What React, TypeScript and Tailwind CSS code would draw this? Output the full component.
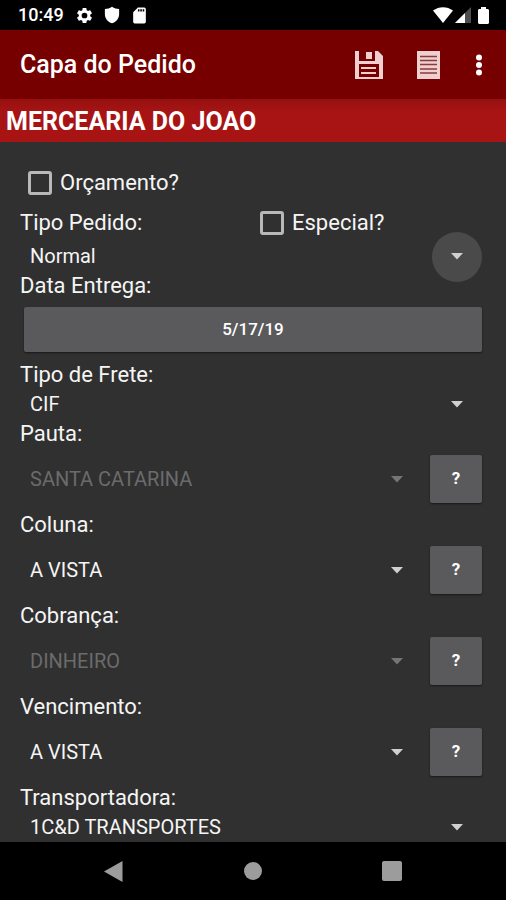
import { useState } from 'react';

function Caret({ dim }: { dim?: boolean }) {
  return (
    <svg
      aria-hidden="true"
      viewBox="0 0 12 7"
      className={`h-[7px] w-3 ${dim ? 'text-[#757575]' : 'text-[#d0d0d0]'}`}
    >
      <path d="M0 0h12L6 6.5z" fill="currentColor" />
    </svg>
  );
}

type SpinnerProps = {
  id: string;
  value: string;
  disabled?: boolean;
  highlighted?: boolean;
};

function Spinner({ id, value, disabled, highlighted }: SpinnerProps) {
  return (
    <div className="relative h-[29px] min-w-0 flex-1">
      <select
        id={id}
        disabled={disabled}
        defaultValue={value}
        className="block h-full w-full appearance-none bg-transparent pr-12 pl-[10px] text-[20px] leading-[29px] text-[#f5f5f5] outline-none disabled:text-[#6b6b6b] disabled:opacity-100"
      >
        <option>{value}</option>
      </select>
      <span
        className={`pointer-events-none absolute top-1/2 right-0 flex size-[50px] -translate-y-1/2 items-center justify-center rounded-full ${
          highlighted ? 'bg-[#4a4a4a]' : ''
        }`}
      >
        <Caret dim={disabled} />
      </span>
    </div>
  );
}

function Label({ htmlFor, text }: { htmlFor: string; text: string }) {
  return (
    <label htmlFor={htmlFor} className="block text-[22px] leading-[30px] text-[#f5f5f5]">
      {text}
    </label>
  );
}

function Field({ label, ...spinner }: SpinnerProps & { label: string }) {
  return (
    <div>
      <Label htmlFor={spinner.id} text={label} />
      <div className="flex">
        <Spinner {...spinner} />
      </div>
    </div>
  );
}

function LookupField({ label, ...spinner }: SpinnerProps & { label: string }) {
  return (
    <div>
      <Label htmlFor={spinner.id} text={label} />
      <div className="flex h-[61px] items-center gap-2 pb-[1px]">
        <Spinner {...spinner} />
        <button
          type="button"
          aria-label={`Consultar ${label}`}
          className="h-12 w-[52px] rounded-[2px] bg-[#5a5a5c] text-[17px] font-bold text-white shadow-[0_1px_2px_rgba(0,0,0,0.5)]"
        >
          ?
        </button>
      </div>
    </div>
  );
}

function Check({ text }: { text: string }) {
  const [checked, setChecked] = useState(false);
  return (
    <label className="flex items-center gap-2 text-[22px] leading-[30px] text-[#f5f5f5]">
      <input
        type="checkbox"
        checked={checked}
        onChange={(e) => setChecked(e.target.checked)}
        className="size-6 appearance-none rounded-[3px] border-[3px] border-[#b8b8b8] checked:bg-[#b8b8b8]"
      />
      {text}
    </label>
  );
}

function StatusBar() {
  return (
    <div className="flex h-[30px] items-center bg-black pr-[17px] pl-[18px] text-white">
      <span className="text-[18px] leading-[32px] font-medium">10:49</span>
      <div className="ml-[11px] flex items-center gap-[9px]">
        <svg viewBox="0 0 24 24" className="size-[19px]" fill="currentColor" aria-hidden="true">
          <path d="M19.14 12.94c.04-.3.06-.61.06-.94 0-.32-.02-.64-.07-.94l2.03-1.58a.49.49 0 0 0 .12-.61l-1.92-3.32a.49.49 0 0 0-.59-.22l-2.39.96a7 7 0 0 0-1.62-.94l-.36-2.54a.48.48 0 0 0-.48-.41h-3.84a.47.47 0 0 0-.47.41l-.36 2.54c-.59.24-1.13.57-1.62.94l-2.39-.96a.48.48 0 0 0-.59.22L2.74 8.87a.47.47 0 0 0 .12.61l2.03 1.58a6 6 0 0 0-.02 1.88l-2.03 1.58a.49.49 0 0 0-.12.61l1.92 3.32c.12.22.37.29.59.22l2.39-.96c.5.38 1.03.7 1.62.94l.36 2.54c.05.24.24.41.48.41h3.84c.24 0 .44-.17.47-.41l.36-2.54a7 7 0 0 0 1.62-.94l2.39.96c.22.08.47 0 .59-.22l1.92-3.32a.47.47 0 0 0-.12-.61zM12 15.6a3.6 3.6 0 1 1 0-7.2 3.6 3.6 0 0 1 0 7.2z" />
        </svg>
        <svg viewBox="0 0 24 24" className="size-[18px]" fill="currentColor" aria-hidden="true">
          <path d="M12 1C9 3 6 4 2.500 4v7c0 5.500 4 10.500 9.500 12 5.500-1.500 9.500-6.500 9.500-12V4C18 4 15 3 12 1z" />
        </svg>
        <svg viewBox="0 0 24 24" className="size-[19px]" fill="currentColor" aria-hidden="true">
          <path d="M18 2h-8L4 8v12a2 2 0 0 0 2 2h12a2 2 0 0 0 2-2V4a2 2 0 0 0-2-2zm-6 5h-2V4h2zm3 0h-2V4h2zm3 0h-2V4h2z" />
        </svg>
      </div>
      <div className="ml-auto flex items-center">
        <svg viewBox="0 0 20 16" className="h-4 w-5" fill="currentColor" aria-hidden="true">
          <path d="M0 3.500C6-1 14-1 20 3.500L10 16z" />
        </svg>
        <svg viewBox="0 0 16 16" className="ml-[2px] size-4" fill="currentColor" aria-hidden="true">
          <path d="M16 0v16H0z" opacity="0.3" />
          <path d="M10 6v10H0z" />
        </svg>
        <svg viewBox="0 0 11 17" className="ml-[7px] h-[17px] w-[11px]" fill="currentColor" aria-hidden="true">
          <path d="M3 0h5v2h2l1 1v13l-1 1H1l-1-1V3l1-1h2z" />
        </svg>
      </div>
    </div>
  );
}

function AppBar() {
  return (
    <header className="flex h-[69px] items-center bg-[#760000] pr-4 pl-5 text-white">
      <h1 className="text-[25px] font-medium">Capa do Pedido</h1>
      <div className="ml-auto flex items-center">
        <button type="button" aria-label="Salvar" className="text-[#efd0d0]">
          <svg viewBox="0 0 28 28" className="size-7" aria-hidden="true">
            <path d="M0 0h4v10h16V0h3l5 5v23H0z" fill="currentColor" />
            <path d="M11 1h6v7h-6z" fill="currentColor" />
            <path d="M4 13h20v13H4z" fill="#760000" />
            <path d="M6 16h15v2H6zM6 21h15v2H6z" fill="currentColor" />
          </svg>
        </button>
        <button type="button" aria-label="Itens" className="ml-[34px] text-[#efd0d0]">
          <svg viewBox="0 0 23 28" className="h-7 w-[23px]" aria-hidden="true">
            <path d="M0 0h23v28H0z" fill="currentColor" />
            <path d="M3 5.500h17M3 9.500h17M3 13.500h17M3 18h17M3 22h17" stroke="#8a3a3a" strokeWidth="1.500" />
          </svg>
        </button>
        <button type="button" aria-label="Mais opções" className="ml-7 flex w-[22px] justify-center">
          <svg viewBox="0 0 6 22" className="h-[22px] w-[6px]" fill="currentColor" aria-hidden="true">
            <circle cx="3" cy="3.500" r="3" />
            <circle cx="3" cy="11" r="3" />
            <circle cx="3" cy="18.500" r="3" />
          </svg>
        </button>
      </div>
    </header>
  );
}

function NavBar() {
  return (
    <nav className="flex h-[58px] items-center justify-center gap-[120px] bg-black text-[#9c9c9c]">
      <button type="button" aria-label="Voltar">
        <svg viewBox="0 0 20 21" className="h-[21px] w-5" fill="currentColor" aria-hidden="true">
          <path d="M18.500 0v21L0 10.500z" />
        </svg>
      </button>
      <button type="button" aria-label="Início" className="size-[18px] rounded-full bg-[#9c9c9c]" />
      <button type="button" aria-label="Recentes" className="size-5 rounded-[2px] bg-[#9c9c9c]" />
    </nav>
  );
}

export default function App() {
  return (
    <div className="flex min-h-screen flex-col bg-[#303030] font-[Roboto,'Noto_Sans',sans-serif]">
      <StatusBar />
      <AppBar />
      <h2 className="h-[43px] bg-linear-to-b from-[#951010] to-[#a81414] to-30% pl-[6px] text-[25px] leading-[46px] font-bold text-white">
        MERCEARIA DO JOAO
      </h2>
      <main className="flex-1 pt-[21px] pr-6 pl-5">
        <div className="flex h-10 items-center pl-2">
          <Check text="Orçamento?" />
        </div>
        <div className="grid h-[39px] grid-cols-2 items-center gap-[18px]">
          <Label htmlFor="tipo" text="Tipo Pedido:" />
          <Check text="Especial?" />
        </div>
        <div className="flex">
          <Spinner id="tipo" value="Normal" highlighted />
        </div>
        <Label htmlFor="data" text="Data Entrega:" />
        <div className="flex h-[59px] pt-[6px] pb-2 pl-1">
          <button
            id="data"
            type="button"
            className="flex-1 rounded-[2px] bg-[#5a5a5c] text-[17px] font-medium text-white shadow-[0_1px_2px_rgba(0,0,0,0.5)]"
          >
            5/17/19
          </button>
        </div>
        <Field id="frete" label="Tipo de Frete:" value="CIF" />
        <LookupField id="pauta" label="Pauta:" value="SANTA CATARINA" disabled />
        <LookupField id="coluna" label="Coluna:" value="A VISTA" />
        <LookupField id="cobranca" label="Cobrança:" value="DINHEIRO" disabled />
        <LookupField id="vencimento" label="Vencimento:" value="A VISTA" />
        <Field id="transportadora" label="Transportadora:" value="1C&D TRANSPORTES" />
      </main>
      <NavBar />
    </div>
  );
}
